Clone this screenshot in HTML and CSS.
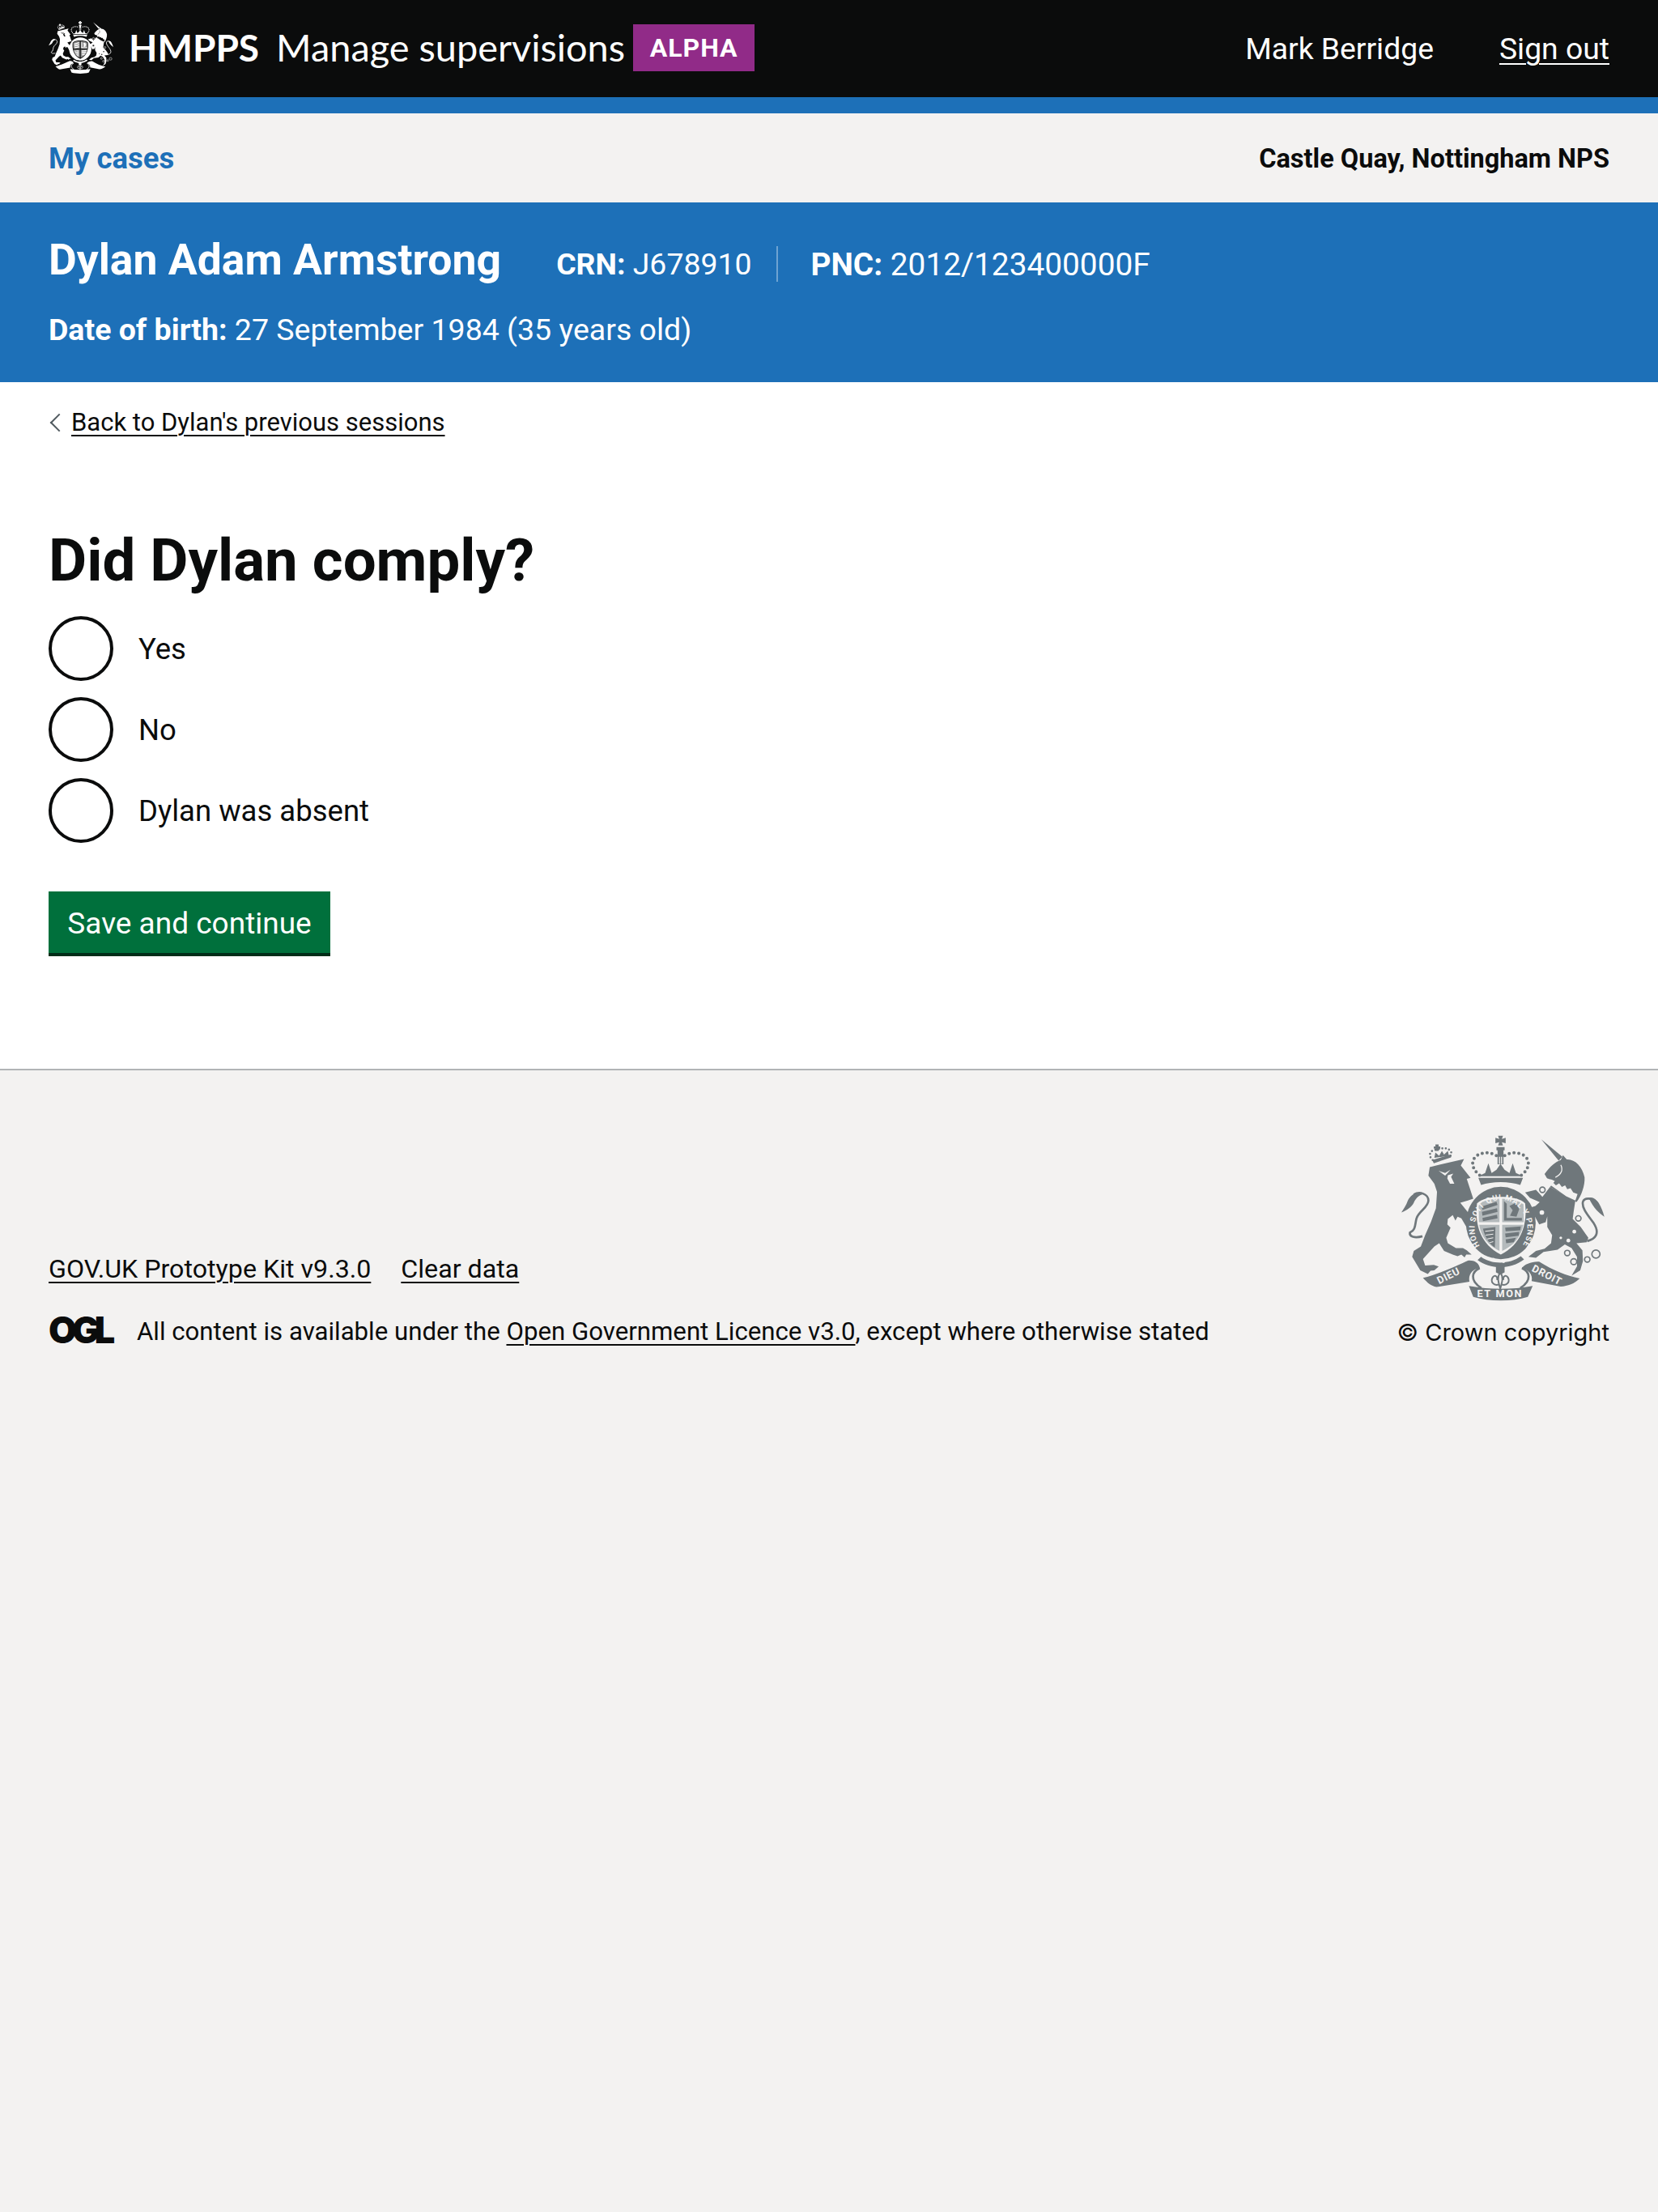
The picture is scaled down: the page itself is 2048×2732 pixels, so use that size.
FILE: index.html
```html
<!DOCTYPE html>
<html lang="en">
<head>
    <meta charset="UTF-8">
    <meta name="viewport" content="width=device-width, initial-scale=1.0">
    <title>Did Dylan comply? - Manage supervisions</title>
    <link rel="stylesheet" href="styles.css">
</head>
<body>
    <svg class="crest-defs" width="0" height="0" aria-hidden="true">
        <symbol id="crest" viewBox="50 20 752 614">
            <!-- lion -->
            <path d="M155 138 L282 108 L270 132 L306 178 L292 182 L316 255 L296 262 L268 270 L300 310 L322 345 L330 372 L318 378 L310 365 L306 378 L296 368 L286 352 L272 328 L258 322 L250 336 L240 316 L222 330 L220 350 L232 362 L216 400 L222 420 L252 438 L278 438 L292 446 L310 462 L290 462 L284 472 L272 462 L258 468 L240 462 L208 448 L190 420 L172 432 L130 478 L138 502 L170 500 L188 506 L172 520 L158 522 L148 534 L120 520 L90 470 L96 448 L122 432 L138 390 L160 340 L178 290 L182 230 L172 200 L150 170Z"/>
            <path class="crest-line" d="M128 394 C100 402 78 396 82 380 C104 372 100 348 106 328 C114 300 150 288 150 262 C150 238 118 226 96 240"/>
            <path d="M122 232 C100 230 82 244 74 262 C68 280 58 294 50 306 C70 298 88 286 96 270 C102 256 112 244 126 240Z"/>
            <path class="crest-gap" d="M188 152 L212 160 L232 148 L212 170Z M222 168 L242 162 L234 174 L246 200 L230 200 L220 180Z"/>
            <!-- lion crown -->
            <path class="crest-dots crest-dots-small" d="M166 112 C150 98 152 78 176 74 C196 70 216 62 232 78 C238 88 234 96 228 100"/>
            <path d="M176 54 H188 V62 H194 V70 H188 V78 H176 V70 H170 V62 H176Z"/>
            <path d="M172 104 L176 84 L190 96 L200 78 L208 92 L222 78 L226 96Z"/>
            <path d="M164 112 L232 92 L234 102 L170 124Z"/>
            <!-- royal crown -->
            <path d="M408 22 H426 L422 34 L436 30 V50 L422 46 L426 58 H408 L412 46 L398 50 V30 L412 34Z"/>
            <path d="M402 64 H432 V76 H428 V128 H406 V76 H402Z"/>
            <path class="crest-gap" d="M411 100 H415 V126 H411Z M419 100 H423 V126 H419Z"/>
            <path d="M335 172 L360 160 L372 124 L384 160 L402 148 L417 126 L432 148 L450 160 L462 124 L474 160 L500 172Z"/>
            <path d="M335 178 H500 L490 204 C450 190 385 190 345 204Z"/>
            <path class="crest-dots" d="M340 168 C310 146 304 112 332 94 C356 80 382 84 402 96 M494 168 C524 146 530 112 502 94 C478 80 452 84 432 96"/>
            <!-- shield and garter -->
            <ellipse cx="418" cy="345" rx="129" ry="134"/>
            <path class="crest-gap" d="M330 272 C350 252 390 248 418 248 C446 248 490 252 508 272 C516 342 500 420 418 462 C336 420 322 342 330 272Z"/>
            <path class="crest-quarter" d="M336 276 C354 260 386 256 413 255 V342 H337Z"/>
            <path class="crest-quarter" d="M423 255 C450 256 482 260 502 276 L503 342 H423Z"/>
            <path class="crest-quarter" d="M338 352 H413 V448 C370 428 344 392 338 352Z"/>
            <path class="crest-quarter" d="M423 352 H501 C494 392 468 428 423 448Z"/>
            <path d="M346 284 L402 266 L406 278 L350 296Z M348 304 L404 290 L406 304 L350 318Z M350 326 L404 314 L406 328 L352 338Z"/>
            <path d="M430 264 V336 H496 V326 H440 V274Z M450 282 L474 270 L486 294 L476 322 L452 318 L462 298Z"/>
            <path d="M352 366 L398 360 L396 436 C372 420 358 392 352 366Z"/>
            <path class="crest-hatch" d="M360 376 L392 372 M362 390 L390 386 M368 404 L390 400 M376 418 L390 414"/>
            <path d="M434 362 L492 358 L490 372 L436 376Z M434 384 L486 378 L484 392 L436 398Z M436 406 L474 400 L466 416 L438 420Z"/>
            <path d="M345 470 C380 498 450 500 492 468 L504 480 C452 520 376 516 332 482Z"/>
            <circle class="crest-gap" cx="390" cy="481" r="7"/>
            <circle class="crest-gap" cx="428" cy="486" r="7"/>
            <!-- unicorn -->
            <path d="M568 36 L646 100 L632 114Z"/>
            <path d="M580 164 C600 136 620 118 640 112 L648 94 L662 110 C692 108 720 136 728 176 C730 206 716 246 698 268 L690 262 L600 212 L618 190 C606 182 594 184 588 178Z"/>
            <path d="M600 212 L694 262 L688 300 L684 330 L714 360 L742 400 L736 416 L698 420 L720 446 L722 486 L712 520 L680 540 L700 505 L700 470 L680 438 L655 424 L628 444 L576 452 L548 474 L520 470 L548 448 L580 440 L604 420 L608 390 L590 360 L590 320 L584 342 L560 350 L536 306 L520 290 L546 282 L562 268 L526 252 L508 232 L548 222 L572 248Z"/>
            <path class="crest-gap" d="M603 206 L612 196 L622 206 L634 198 L644 212 L656 206 L664 220 L676 216 L686 232 L702 238 L694 262 L660 246Z"/>
            <path class="crest-gap-line" d="M640 130 C650 150 640 166 620 176"/>
            <circle class="crest-gap" cx="690" cy="377" r="7"/>
            <circle class="crest-gap" cx="668" cy="410" r="7"/>
            <circle class="crest-gap" cx="640" cy="400" r="5"/>
            <circle class="crest-ring" cx="572" cy="222" r="10"/>
            <circle class="crest-ring" cx="570" cy="306" r="11"/>
            <circle class="crest-ring" cx="705" cy="328" r="10"/>
            <circle class="crest-ring" cx="664" cy="456" r="10"/>
            <circle class="crest-ring" cx="688" cy="488" r="11"/>
            <circle class="crest-ring" cx="738" cy="480" r="10"/>
            <circle class="crest-ring" cx="770" cy="460" r="15"/>
            <path class="crest-line" d="M738 412 C768 404 786 384 762 346 C742 318 716 290 722 266 C728 250 756 250 776 272"/>
            <path d="M744 252 C770 244 790 280 801 322 C782 308 760 290 744 252Z"/>
            <!-- ribbon -->
            <path d="M130 548 C190 534 260 500 296 484 C318 482 338 492 340 512 C316 514 296 534 302 562 L180 582 C160 578 146 566 130 548Z"/>
            <path d="M560 488 C610 520 660 540 710 550 C690 570 666 578 640 580 L532 560 C538 536 518 516 496 512 C504 498 534 486 560 488Z"/>
            <path d="M300 578 C380 592 460 592 536 578 L518 618 C460 636 376 636 316 618Z"/>
            <path class="crest-line" d="M340 512 C312 524 300 556 346 586 M496 512 C524 524 536 556 490 586"/>
            <!-- fleur de lis -->
            <path d="M400 504 H432 V528 L416 536 L400 528Z"/>
            <path class="crest-fleur" d="M416 528 C402 546 410 566 416 588 C422 566 430 546 416 528Z M412 572 C392 580 378 562 388 546 C396 534 408 544 404 556 M420 572 C440 580 454 562 444 546 C436 534 424 544 428 556"/>
        </symbol>
    </svg>

    <header class="site-header">
        <div class="site-header-left">
            <svg class="header-crest"><use href="#crest"></use></svg>
            <span class="header-org">HMPPS</span>
            <span class="header-service">Manage supervisions</span>
            <span class="header-tag">ALPHA</span>
        </div>
        <div class="site-header-right">
            <span class="header-user">Mark Berridge</span>
            <a class="header-link" href="#">Sign out</a>
        </div>
    </header>

    <nav class="sub-nav">
        <a class="sub-nav-link" href="#">My cases</a>
        <span class="sub-nav-office">Castle Quay, Nottingham NPS</span>
    </nav>

    <section class="offender-band">
        <div class="offender-top">
            <span class="offender-name">Dylan Adam Armstrong</span>
            <span class="offender-ref offender-crn"><b>CRN:</b> J678910</span>
            <span class="offender-ref offender-pnc"><b>PNC:</b> 2012/123400000F</span>
        </div>
        <div class="offender-dob"><b>Date of birth:</b> 27 September 1984 (35 years old)</div>
    </section>

    <main class="page-main">
        <a class="back-link" href="#">Back to Dylan's previous sessions</a>
        <h1 class="page-title">Did Dylan comply?</h1>
        <form class="radio-group">
            <label class="radio-item"><span class="radio-circle"></span><span>Yes</span></label>
            <label class="radio-item"><span class="radio-circle"></span><span>No</span></label>
            <label class="radio-item"><span class="radio-circle"></span><span>Dylan was absent</span></label>
            <button class="save-button" type="button">Save and continue</button>
        </form>
    </main>

    <footer class="site-footer">
        <div class="footer-left">
            <div class="footer-links">
                <a href="#">GOV.UK Prototype Kit v9.3.0</a>
                <a href="#">Clear data</a>
            </div>
            <div class="footer-licence">
                <span class="ogl-logo">OGL</span>
                <span>All content is available under the <a href="#">Open Government Licence v3.0</a>, except where otherwise stated</span>
            </div>
        </div>
        <div class="footer-right">
            <svg class="footer-crest" viewBox="50 20 752 614">
                <use href="#crest" x="50" y="20" width="752" height="614"></use>
                <defs>
                    <path id="garter-ring" d="M344 434 A98 106 0 1 1 494 434"></path>
                </defs>
                <text class="crest-garter"><textPath href="#garter-ring" textLength="450" startOffset="6">HONI SOIT QUI MAL Y PENSE</textPath></text>
                <text class="crest-motto" x="190" y="572" transform="rotate(-27 190 572)">DIEU</text>
                <text class="crest-motto crest-motto-wide" x="330" y="620">ET MON</text>
                <text class="crest-motto" x="530" y="522" transform="rotate(27 530 522)">DROIT</text>
            </svg>
            <div class="footer-copyright">© Crown copyright</div>
        </div>
    </footer>
</body>
</html>
```

FILE: styles.css
```css
body {
    margin: 0;
    font-family: Roboto, Arial, Helvetica, sans-serif;
    color: #0b0c0c;
    background-color: #f3f2f1;
}
a {
    color: inherit;
    text-decoration: underline;
    text-decoration-thickness: 2px;
    text-underline-offset: 5px;
}
b {
    font-weight: 700;
}


.crest-defs {
    position: absolute;
}
.crest-gap {
    fill: var(--crest-bg);
}
.crest-quarter {
    fill: var(--crest-mid);
}
.crest-gap-line {
    fill: none;
    stroke: var(--crest-bg);
    stroke-width: 4;
}
.crest-hatch {
    fill: none;
    stroke: var(--crest-bg);
    stroke-width: 3;
}
.crest-line {
    fill: none;
    stroke: currentColor;
    stroke-width: 8;
}
.crest-dots {
    fill: none;
    stroke: currentColor;
    stroke-width: 12;
    stroke-linecap: round;
    stroke-dasharray: 0 18;
}
.crest-dots-small {
    stroke-width: 8;
    stroke-dasharray: 0 13;
}
.crest-ring {
    fill: var(--crest-bg);
    stroke: currentColor;
    stroke-width: 5;
}
.crest-fleur {
    fill: var(--crest-bg);
    stroke: currentColor;
    stroke-width: 6;
}
.crest-motto {
    font-family: Roboto, Arial, sans-serif;
    font-size: 38px;
    font-weight: 700;
    letter-spacing: 2px;
    fill: #f3f2f1;
}
.crest-motto-wide {
    letter-spacing: 5px;
}
.crest-garter {
    font-family: Roboto, Arial, sans-serif;
    font-size: 29px;
    font-weight: 700;
    fill: #f3f2f1;
}


.site-header {
    display: flex;
    justify-content: space-between;
    align-items: center;
    height: 120px;
    padding: 0 60px;
    background-color: #0b0c0c;
    border-bottom: 20px solid #1d70b8;
    color: white;
}
.site-header-left {
    display: flex;
    align-items: center;
}
.header-crest {
    --crest-bg: #0b0c0c;
    --crest-mid: #8a8a8a;
    width: 80px;
    height: 67px;
    margin-bottom: 4px;
    color: white;
    fill: currentColor;
}
.header-org {
    margin-left: 19px;
    margin-bottom: 4px;
    font-size: 46px;
    font-weight: 700;
    font-family: Lato, Arial, sans-serif;
}
.header-service {
    margin-left: 21px;
    margin-bottom: 4px;
    font-size: 46.9px;
    font-family: Lato, Arial, sans-serif;
}
.header-tag {
    display: flex;
    align-items: center;
    justify-content: center;
    width: 150px;
    height: 58px;
    margin-left: 10px;
    margin-bottom: 2px;
    background-color: #912b88;
    font-size: 32px;
    font-weight: 700;
    letter-spacing: 1px;
}
.site-header-right {
    display: flex;
    gap: 81px;
    font-size: 37.3px;
}
.sub-nav {
    display: flex;
    justify-content: space-between;
    align-items: center;
    height: 110px;
    padding: 0 60px;
}
.sub-nav-link {
    color: #1d70b8;
    font-size: 36.5px;
    font-weight: 700;
    text-decoration: none;
}
.sub-nav-office {
    margin-top: 2px;
    font-size: 32.5px;
    font-weight: 700;
}


.offender-band {
    height: 222px;
    padding: 0 60px;
    box-sizing: border-box;
    background-color: #1d70b8;
    color: white;
}
.offender-top {
    display: flex;
    align-items: center;
    height: 135px;
}
.offender-name {
    margin-top: 5px;
    margin-right: 68px;
    font-size: 53.5px;
    font-weight: 700;
}
.offender-ref {
    font-size: 38.8px;
    margin-top: 17px;
}
.offender-crn {
    padding-right: 31px;
    border-right: 2px solid #6ea3d2;
    font-size: 37.4px;
}
.offender-pnc {
    margin-left: 40px;
}
.offender-dob {
    font-size: 37.5px;
}


.page-main {
    height: 850px;
    padding: 31px 60px 0;
    box-sizing: border-box;
    background-color: white;
    border-bottom: 2px solid #b1b4b6;
}
.back-link {
    display: block;
    position: relative;
    width: max-content;
    padding-left: 28px;
    font-size: 31px;
}
.back-link::before {
    content: "";
    position: absolute;
    left: 5px;
    top: 11px;
    width: 16px;
    height: 16px;
    box-sizing: border-box;
    border-left: 2px solid #505a5f;
    border-bottom: 2px solid #505a5f;
    transform: rotate(45deg);
}
.page-title {
    margin: 111px 0 26px;
    font-size: 72.6px;
    line-height: 84px;
    font-weight: 700;
}
.radio-group {
    display: flex;
    flex-direction: column;
    align-items: flex-start;
    gap: 20px;
}
.radio-item {
    display: flex;
    align-items: center;
    gap: 31px;
    height: 80px;
    font-size: 36.5px;
}
.radio-circle {
    width: 80px;
    height: 80px;
    box-sizing: border-box;
    border: 4px solid #0b0c0c;
    border-radius: 50%;
}
.save-button {
    width: 348px;
    height: 80px;
    margin-top: 40px;
    padding: 0 0 2px;
    border: 0;
    box-shadow: inset 0 -4px 0 #002d18;
    background-color: #00703c;
    color: white;
    font-family: inherit;
    font-size: 37px;
}


.site-footer {
    display: flex;
    justify-content: space-between;
    align-items: flex-end;
    padding: 80px 60px 0;
    font-size: 32.2px;
}
.footer-links {
    display: flex;
    gap: 37px;
}
.footer-licence {
    display: flex;
    align-items: flex-end;
    gap: 26px;
    margin-top: 37px;
    font-size: 31.2px;
}
.ogl-logo {
    font-family: Inter, Arial, sans-serif;
    font-size: 45px;
    font-weight: 900;
    line-height: 40px;
    letter-spacing: -6px;
    width: 83px;
}
.footer-right {
    display: flex;
    flex-direction: column;
    align-items: flex-end;
}
.footer-crest {
    --crest-bg: #f3f2f1;
    --crest-mid: #b4babc;
    width: 251px;
    height: 205px;
    margin-right: 6px;
    color: #6f777b;
    fill: currentColor;
}
.footer-copyright {
    margin-top: 21px;
    font-family: Inter, Arial, sans-serif;
    font-size: 29px;
}
```
